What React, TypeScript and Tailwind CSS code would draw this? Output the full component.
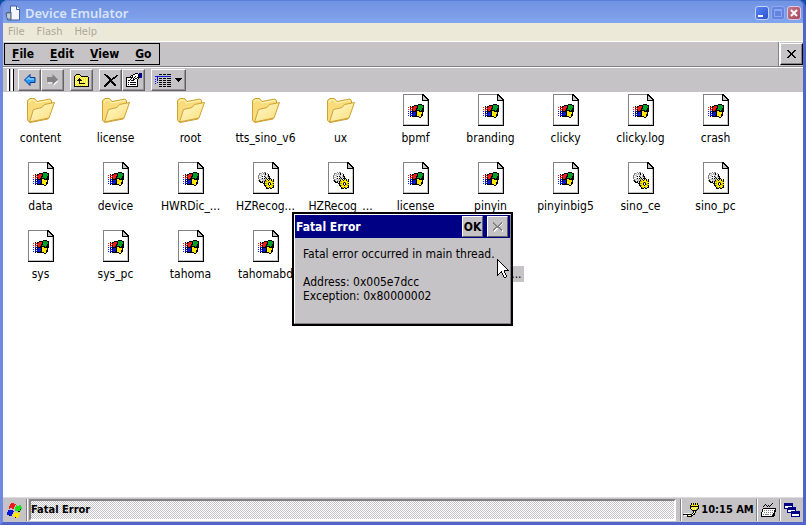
import type { ReactNode } from 'react'
import { clsx } from 'clsx'

const COLORS: Record<string, string> = {
  k: '#000000',
  w: '#ffffff',
  r: '#ef1c18',
  g: '#00a028',
  l: '#20e020',
  b: '#0818d8',
  n: '#000084',
  y: '#ffe800',
  o: '#a59c00',
  p: '#ffffa5',
  d: '#848284',
  s: '#c6c3c6',
}

// Draws a small bitmap icon, one character per pixel
function Pixels({ rows, className }: { rows: string[]; className?: string }) {
  const width = rows[0].length
  return (
    <svg
      width={width}
      height={rows.length}
      viewBox={`0 0 ${width} ${rows.length}`}
      shapeRendering="crispEdges"
      className={clsx('shrink-0', className)}
      aria-hidden="true"
    >
      {rows.flatMap((row, y) =>
        [...row].map((c, x) =>
          COLORS[c] ? <rect key={`${x}-${y}`} x={x} y={y} width={1} height={1} fill={COLORS[c]} /> : null
        )
      )}
    </svg>
  )
}

const FLAG = [
  '..........kkkk..',
  '......kkkkggggkk',
  '..k.kkrrrkgggggk',
  'r.rrkrrrrkgggggk',
  '..k.rrrrkkggggkk',
  'r.rrkrrrkgggggkk',
  '..r.krrkkkkkgkkk',
  'b.bbkkkkkyykkkkk',
  '..k.kbbbkyyyyyk.',
  'b.bbkbbbkyyyyyk.',
  '..b.bbbbkyyyykk.',
  'b.bbkbbkkyyyykk.',
  '..k.kkkkkkkyyk..',
  '...........kk...',
]

const GEARS = [
  '....d.dd........',
  '.ddswdsk.d......',
  '.dwsssskswk.....',
  'dssswwsswsk.....',
  'dwwsk.kswskk....',
  'dssw...ksssk....',
  'dwwsk.ksk.kkk...',
  '.dsssssdyk.kyk.k',
  'dkswssskyykyykyk',
  '.kkskskooyyyyyok',
  '..kkk.kyyyokoyyy',
  '.....kkooyk.kyok',
  '......kyyyk.koyy',
  '......kkoyykyyok',
  '.......kyyyyyyyk',
  '........koykoykk',
  '........kkk.kk..',
]

const UP_FOLDER = [
  '..kkkk..........',
  '.kypypk.........',
  'kypypypkkkkkkk..',
  'kpypypypypypypk.',
  'kypypkpypypypyk.',
  'kpypkkkypypypyk.',
  'kypkkkkkpypypyk.',
  'kpypykpypypypyk.',
  'kypypkpypypypyk.',
  'kpypykkkkkkypyk.',
  'kypypypypypypyk.',
  'kpypypypypypypk.',
  'kkkkkkkkkkkkkkk.',
]

const DELETE = [
  'kk............',
  '.kkk........kk',
  '..kkk......kk.',
  '...kkk...kkk..',
  '....kkk.kkk...',
  '.....kkkk.....',
  '.....kkk......',
  '....kkkkk.....',
  '...kkk.kkk....',
  '..kkk...kkk...',
  '.kkk.....kkk..',
  'kkk.......kk..',
  'kk............',
]

const PROPERTIES = [
  '.........kkk.nnn',
  '.......kkwwwknnn',
  '.....kkwwwwwknnn',
  '....kwkwwkwwknnn',
  'kkkkkkkwkwwkkkbb',
  'kwwwwkwkwkkwk...',
  'kwwwkwwkkwwk....',
  'kwkkwkkkwwwk....',
  'kwwwwwwwwwwk....',
  'kwkwkkkkkkwk....',
  'kwwwwwwwwwwk....',
  'kwkwkkkkkkwk....',
  'kwwwwwwwwwwk....',
  'kkkkkkkkkkkk....',
]

const DETAILS = [
  '....kkk.kkk.kkkk',
  '................',
  'bbbbbbbbbbbbbbbb',
  '..b.............',
  '..b.kkk.kkk.kkkk',
  'b.b.............',
  '..b.kkk.kkk.kkkk',
  'b...............',
  '..b.kkk.kkk.kkkk',
  'b...............',
  '....kkk.kkk.kkkk',
  '................',
  '....kkk.kkk.kkkk',
]

const SMALL_X = [
  'kk.....kk',
  '.kk...kk.',
  '..kk.kk..',
  '...kkk...',
  '...kkk...',
  '..kk.kk..',
  '.kk...kk.',
  'kk.....kk',
]

const DISABLED_X = [
  'd.......d.',
  'dd.....ddw',
  '.dd...ddw.',
  '..dd.ddw..',
  '...dddw...',
  '..ddddd...',
  '.ddww.dd..',
  'ddww...dd.',
  'dww.....dw',
  '.w.......w',
]

const START = [
  '....rrr.........',
  '...rrrrrr.......',
  '...rrrrr.l..ll..',
  '..rrrrrr.lllll..',
  '..rrrrr.lllllll.',
  '..r..rr.lllllll.',
  '........lllllk..',
  '.bbbbb..llllll..',
  '.bbbbbb....kk...',
  'bbbbbb.yy...y...',
  'bbbbbb.yyyyyy...',
  'bbbbb.yyyyyyy...',
  '..kbb.yyyyyy....',
  '......yyyyyy....',
  '........kyy.....',
]

const PLUG = [
  '........kyk.kyk.',
  '........kyk.kyk.',
  '.......kyyyyyyyk',
  '.......kkkkkkkkk',
  '.......kypypypyk',
  '.......kpypypydk',
  '........kypypdk.',
  '.........kkkkk..',
  '..........kyk...',
  '..........kpk...',
  '.wwwwww..kpk....',
  'kkkkkkkkkpkk....',
  '.wwwkpppkk......',
  '....kkkkk.......',
]

const KEYBOARD = [
  '...........k...',
  '....k.....k....',
  '...k.k.k.k.....',
  '..k...k.k......',
  '...............',
  '..kkkkkkkkkkkkk',
  '.kwwwwwwwwwwwwk',
  '.kwdwdwdwdwdwkk',
  '.kwwwwwwwwwwwkk',
  'kwwdwdwdwdwdwk.',
  'kwwwwwwwwwwwkk.',
  'kwdwddddwdwdkk.',
  'kwwwwwwwwwwkkk.',
  'kkkkkkkkkkkkk..',
]

const WINDOWS = [
  'nnnnnnnnn.......',
  'nnnnnnnnn.......',
  'nnnnnnnnn.......',
  'nwwwwwwwn.......',
  'nwwwnnnnnnnn....',
  'nnnnnnnnnnnn....',
  '...nnnnnnnnn....',
  '...nwwwwwwwn....',
  '...nwwwnnnnnnnnn',
  '...nnnnnnnnnnnnn',
  '.......nnnnnnnnn',
  '.......nwwwwwwwn',
  '.......nwwwwwwwn',
  '.......nnnnnnnnn',
]

const CURSOR = [
  'k...........',
  'kk..........',
  'kwk.........',
  'kwwk........',
  'kwwwk.......',
  'kwwwwk......',
  'kwwwwwk.....',
  'kwwwwwwk....',
  'kwwwwwwwk...',
  'kwwwwwwwwk..',
  'kwwwwwwwwwk.',
  'kwwwwwwkkkkk',
  'kwwwkwwk....',
  'kwwkkwwk....',
  'kwk..kwwk...',
  'kk...kwwk...',
  'k.....kwwk..',
  '......kwwk..',
  '.......kk...',
]

type Kind = 'folder' | 'file' | 'library'

interface Entry {
  name: string
  kind: Kind
}

const ENTRIES: Entry[] = [
  { name: 'content', kind: 'folder' },
  { name: 'license', kind: 'folder' },
  { name: 'root', kind: 'folder' },
  { name: 'tts_sino_v6', kind: 'folder' },
  { name: 'ux', kind: 'folder' },
  { name: 'bpmf', kind: 'file' },
  { name: 'branding', kind: 'file' },
  { name: 'clicky', kind: 'file' },
  { name: 'clicky.log', kind: 'file' },
  { name: 'crash', kind: 'file' },
  { name: 'data', kind: 'file' },
  { name: 'device', kind: 'file' },
  { name: 'HWRDic_...', kind: 'file' },
  { name: 'HZRecog...', kind: 'library' },
  { name: 'HZRecog_...', kind: 'library' },
  { name: 'license', kind: 'file' },
  { name: 'pinyin', kind: 'file' },
  { name: 'pinyinbig5', kind: 'file' },
  { name: 'sino_ce', kind: 'library' },
  { name: 'sino_pc', kind: 'library' },
  { name: 'sys', kind: 'file' },
  { name: 'sys_pc', kind: 'file' },
  { name: 'tahoma', kind: 'file' },
  { name: 'tahomabd', kind: 'file' },
]

function FolderIcon() {
  return (
    <svg width="28" height="32" viewBox="0 0 28 32" aria-hidden="true">
      <defs>
        <linearGradient id="folder" x1="0" y1="0" x2="1" y2="1">
          <stop offset="0" stopColor="#fffbd0" />
          <stop offset="1" stopColor="#f9dc78" />
        </linearGradient>
      </defs>
      <path
        d="M.5 26.5V6.5L3 4.500h4.500L10 7.500l13-2.500 1.500 1.500v4L21 25 3 28.500z"
        fill="#f8dc7c"
        stroke="#cda233"
      />
      <path d="M2 9l1.500-3h3.500L9.500 9 23 6.500" fill="none" stroke="#fff8b8" />
      <path d="M2.500 28L6.500 15.500l8.500-2 2.500-3 10-2-5.500 15.500z" fill="url(#folder)" stroke="#cda233" />
    </svg>
  )
}

function PageIcon({ rows }: { rows: string[] }) {
  return (
    <div className="relative h-8 w-[26px]">
      <svg width="26" height="32" viewBox="0 0 26 32" shapeRendering="crispEdges" aria-hidden="true">
        <path d="M0 0h20l6 6v26H0z" fill="#fff" />
        <path d="M0 0h20v1H1v30H0z" fill="#848284" />
        <path d="M0 31h26v1H0zM25 6h1v26h-1z" />
        <path d="M1 30h24v1H1zM24 7h1v24h-1z" fill="#c6c3c6" />
        <path d="M19 0h1l6 6v1h-7z" />
        <path d="M20 2l4 4h-4z" fill="#c6c3c6" />
      </svg>
      <Pixels rows={rows} className="absolute top-[10px] left-[5px]" />
    </div>
  )
}

function EntryIcon({ kind }: { kind: Kind }) {
  if (kind === 'folder') return <FolderIcon />
  return <PageIcon rows={kind === 'library' ? GEARS : FLAG} />
}

function ToolButton({ label, wide, children }: { label: string; wide?: boolean; children: ReactNode }) {
  return (
    <button
      aria-label={label}
      className={clsx(
        'flex h-[22px] items-center justify-center gap-1 border border-t-white border-l-white border-r-[#636163] border-b-[#636163] bg-[#c6c3c6] shadow-[inset_-1px_-1px_0_#949294]',
        wide ? 'w-[35px]' : 'w-[23px]'
      )}
    >
      {children}
    </button>
  )
}

function Divider() {
  return <div className="h-[22px] w-[2px] border-r border-r-white bg-[#848284]" />
}

function TitleBar() {
  return (
    <header className="flex h-[23px] shrink-0 items-center gap-1 rounded-t-md border-t border-[#5a7fd6] bg-linear-to-b from-[#7295e3] from-10% via-[#7a9ae6] via-50% to-[#80a4ed] to-90% px-[2px] pt-[2px]">
      <svg width="16" height="16" viewBox="0 0 16 16" className="shrink-0" aria-hidden="true">
        <path d="M5.500 1h6l3 3v11h-9z" fill="#f4f7ff" stroke="#41619e" />
        <path d="M11.500 1v3.500H15" fill="#fff" stroke="#41619e" />
        <path d="M1 8l5-1v8H2.500z" fill="#9aa8bd" stroke="#4c5c78" />
        <path d="M2 10h3M2 12h3" stroke="#e9eef6" />
      </svg>
      <h1 className="flex-1 font-['Noto_Sans'] text-[13px] leading-4 font-semibold text-[#d8e4f8]">Device Emulator</h1>
      <div className="flex items-center gap-[2px]">
        <button
          aria-label="Minimize"
          className="flex size-[14px] items-end rounded-[3px] border border-[#c3d3fa] bg-linear-to-br from-[#5b83f0] to-[#2b53cf] p-[2px]"
        >
          <span className="h-[2px] w-[5px] bg-white" />
        </button>
        <button
          aria-label="Maximize"
          disabled
          className="flex size-[14px] items-center justify-center rounded-[3px] border border-[#90aaf0] bg-[#6283e0]"
        >
          <span className="size-2 border border-t-2 border-[#8ea8f0]" />
        </button>
        <button
          aria-label="Close"
          className="flex size-[14px] items-center justify-center rounded-[3px] border border-[#dcc9df] bg-linear-to-br from-[#c4788a] to-[#a8485c]"
        >
          <svg width="8" height="8" viewBox="0 0 8 8" stroke="#fff" strokeWidth="2" aria-hidden="true">
            <path d="M1 1l6 6M7 1L1 7" />
          </svg>
        </button>
      </div>
    </header>
  )
}

function MenuBar() {
  const menus = ['File', 'Edit', 'View', 'Go']

  return (
    <div className="flex h-[26px] shrink-0 items-center border-t border-b border-t-white border-b-[#848284] bg-[#c6c3c6] pl-px">
      <nav className="flex h-[22px] items-center gap-4 border border-black px-[7px] text-[12px] font-bold">
        {menus.map((menu) => (
          <button key={menu} className="leading-4">
            <span className="underline underline-offset-2">{menu[0]}</span>
            {menu.slice(1)}
          </button>
        ))}
      </nav>
      <div className="ml-auto flex">
        <div className="h-6 w-[2px] border-r border-r-white bg-[#848284]" />
        <button
          aria-label="Close window"
          className="mt-px flex h-[22px] w-[23px] items-center justify-center border border-t-white border-r-black border-b-black border-l-white bg-[#c6c3c6] shadow-[inset_-1px_-1px_0_#848284]"
        >
          <Pixels rows={SMALL_X} />
        </button>
      </div>
    </div>
  )
}

function ToolBar() {
  return (
    <div className="flex h-[25px] shrink-0 items-center border-t border-white bg-[#c6c3c6] pl-1">
      <div className="mr-1 flex gap-px">
        <div className="h-[22px] w-[3px] border-x border-l-white border-r-black bg-white" />
        <div className="h-[22px] w-[3px] border-x border-l-white border-r-black bg-white" />
      </div>
      <ToolButton label="Back">
        <svg width="12" height="12" viewBox="0 0 12 12" aria-hidden="true">
          <path d="M.5 6L6 .5v3h5v5H6v3z" fill="#2a9cf5" stroke="#083898" />
          <path d="M2.500 6L5 3.500v1.500h5" fill="none" stroke="#a8e0ff" />
        </svg>
      </ToolButton>
      <ToolButton label="Forward">
        <svg width="12" height="12" viewBox="0 0 12 12" aria-hidden="true">
          <path d="M12 6.500L6.500 12V9.500H1v-1h6z" fill="#fff" />
          <path d="M11 5.500L5.500 0v3H0v5h5.500v3z" fill="#848284" />
        </svg>
      </ToolButton>
      <div className="ml-[6px] flex">
        <ToolButton label="Up one level">
          <Pixels rows={UP_FOLDER} />
        </ToolButton>
      </div>
      <div className="ml-[6px] flex">
        <ToolButton label="Delete">
          <Pixels rows={DELETE} />
        </ToolButton>
        <ToolButton label="Properties">
          <Pixels rows={PROPERTIES} />
        </ToolButton>
      </div>
      <div className="ml-[6px] flex">
        <ToolButton label="View options" wide>
          <Pixels rows={DETAILS} />
          <Pixels rows={['kkkkkkk', '.kkkkk.', '..kkk..', '...k...']} />
        </ToolButton>
      </div>
    </div>
  )
}

function FileGrid() {
  return (
    <ul className="grid grid-cols-[repeat(auto-fill,75px)] gap-y-[2px] pt-[2px] text-[12px] leading-4">
      {ENTRIES.map((entry, i) => (
        <li key={i} className="flex h-[66px] flex-col items-center whitespace-nowrap">
          <EntryIcon kind={entry.kind} />
          <span className="mt-1">{entry.name}</span>
        </li>
      ))}
      <li className="col-start-7 flex h-[66px] flex-col items-center">
        <EntryIcon kind="file" />
        <span className="mt-1 w-[66px] bg-[#c6c3c6] pr-[2px] text-right">...</span>
      </li>
    </ul>
  )
}

function ErrorDialog() {
  return (
    <div
      role="dialog"
      aria-labelledby="dialog-title"
      className="absolute top-[120px] left-[289px] w-[221px] border-2 border-black bg-[#c6c3c6]"
    >
      <div className="border border-t-white border-r-[#848284] border-b-[#848284] border-l-white">
        <div className="flex h-[23px] items-center bg-[#000084] pr-[2px] pl-px">
          <h2 id="dialog-title" className="flex-1 text-[12px] leading-4 font-bold text-white">
            Fatal Error
          </h2>
          <button className="h-[21px] w-[21px] border border-t-white border-r-[#636163] border-b-[#636163] border-l-white bg-[#c6c3c6] text-center text-[12px] leading-4 font-bold">
            OK
          </button>
          <button
            aria-label="Close"
            disabled
            className="ml-1 flex h-[21px] w-[21px] items-center justify-center border border-t-white border-r-[#636163] border-b-[#636163] border-l-white bg-[#c6c3c6]"
          >
            <Pixels rows={DISABLED_X} />
          </button>
        </div>
        <div className="h-[85px] px-2 pt-[9px] text-[12px] leading-[14px] whitespace-nowrap">
          <p>Fatal error occurred in main thread.</p>
          <p className="mt-[14px]">Address: 0x005e7dcc</p>
          <p>Exception: 0x80000002</p>
        </div>
      </div>
    </div>
  )
}

function TaskBar() {
  return (
    <footer className="flex h-[25px] shrink-0 items-center border-t border-[#dedbde] bg-[#c6c3c6] text-[11px] font-bold">
      <button aria-label="Start" className="flex w-[23px] justify-center">
        <Pixels rows={START} />
      </button>
      <Divider />
      <button className="ml-px h-[22px] flex-1 border-2 border-t-[#848284] border-r-white border-b-white border-l-[#848284] bg-[conic-gradient(#fff_25%,#c6c3c6_0_50%,#fff_0_75%,#c6c3c6_0)] bg-size-[2px_2px] text-left leading-4">
        Fatal Error
      </button>
      <div className="ml-1 flex items-center">
        <Divider />
        <Pixels rows={PLUG} className="ml-px" />
        <time className="w-[57px] text-center">10:15 AM</time>
        <Divider />
        <button aria-label="Keyboard" className="mx-[3px]">
          <Pixels rows={KEYBOARD} />
        </button>
        <Divider />
        <button aria-label="Show desktop" className="mx-[3px]">
          <Pixels rows={WINDOWS} />
        </button>
      </div>
    </footer>
  )
}

export default function App() {
  return (
    <div className="min-h-screen bg-[#0a50a1] font-['DejaVu_Sans_Condensed','DejaVu_Sans',sans-serif] text-black">
      <div className="flex min-h-screen flex-col rounded-t-lg border-x-3 border-b-3 border-r-[#5064cc] border-b-[#5064cc] border-l-[#7088e0] bg-[#7b99e6]">
        <TitleBar />
        <nav className="flex h-[18px] shrink-0 items-center gap-3 bg-[#ece9d8] px-[5px] text-[11px] leading-4 text-[#aca899]">
          <button>File</button>
          <button>Flash</button>
          <button>Help</button>
        </nav>
        <MenuBar />
        <ToolBar />
        <main className="relative flex-1 bg-white">
          <FileGrid />
          <ErrorDialog />
          <Pixels rows={CURSOR} className="absolute top-[167px] left-[494px]" />
        </main>
        <TaskBar />
      </div>
    </div>
  )
}
